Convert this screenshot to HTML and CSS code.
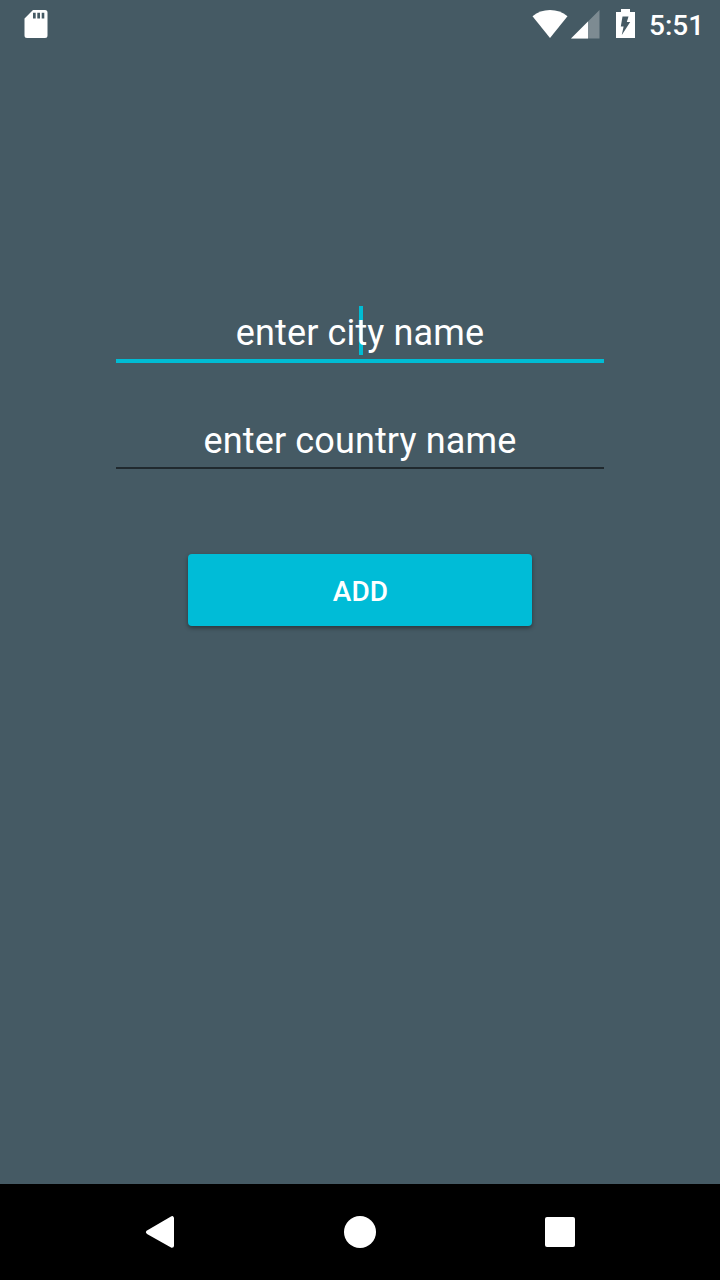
FILE: index.html
```html
<!DOCTYPE html>
<html lang="en">
<head>
<meta charset="utf-8">
<title>Add city</title>
<link rel="stylesheet" href="styles.css">
</head>
<body>
<div class="screen">
  <header class="status-bar">
    <svg class="icon-sd" width="24" height="28" viewBox="0 0 24 28"><path fill="#fff" fill-rule="evenodd" d="M9 0H21Q23.500 0 23.500 2.500V25.500Q23.500 28 21 28H3Q.5 28 .5 25.500V8.500ZM9 2.700V8.500H11.700V2.700ZM13.300 2.700V8.500H16V2.700ZM17.700 2.700V8.500H20.300V2.700Z"/></svg>
    <div class="status-right">
      <svg class="icon-wifi" width="36" height="28" viewBox="0 0 36 28"><path fill="#fff" d="M18 28L.5 6.200Q8 0 18 0T35.500 6.200Z"/></svg>
      <svg class="icon-signal" width="29" height="29" viewBox="0 0 29 29"><path fill="#fff" fill-opacity=".3" d="M0 28.500L28.500 0V28.500Z"/><path fill="#fff" d="M0 28.500L17 11.500V28.500Z"/></svg>
      <svg class="icon-battery" width="19" height="29" viewBox="0 0 19 29"><path fill="#fff" fill-rule="evenodd" d="M5 0H14V3H19V29H0V3H5ZM6.500 7.500H12.500L10.800 13H14.200L5.800 26L7.600 17.500H4.800Z"/></svg>
      <span class="clock">5:51</span>
    </div>
  </header>
  <main class="form">
    <div class="field focused"><span class="caret"></span><span class="label">enter city name</span></div>
    <div class="field"><span class="label">enter country name</span></div>
    <button class="add" type="button">ADD</button>
  </main>
  <nav class="nav-bar">
    <svg width="32" height="32" viewBox="0 0 32 32"><path fill="#fff" stroke="#fff" stroke-width="4" stroke-linejoin="round" d="M4 16.200L28 2.200V29.800Z"/></svg>
    <svg width="32" height="32" viewBox="0 0 32 32"><circle fill="#fff" cx="16" cy="16" r="16"/></svg>
    <svg width="32" height="32" viewBox="0 0 32 32"><rect fill="#fff" x="1" y="1" width="30" height="30" rx="2"/></svg>
  </nav>
</div>
</body>
</html>
```
FILE: styles.css
```css
* { box-sizing: border-box; }
body { margin: 0; background: #455a64; color: #fff; font-family: Roboto, sans-serif; }
svg { display: block; flex: none; }
.screen { width: 720px; height: 1280px; display: flex; flex-direction: column; }
.status-bar { height: 48px; display: flex; justify-content: space-between; align-items: flex-start; padding: 0 17px 0 24px; }
.icon-sd { margin-top: 10px; }
.status-right { display: flex; align-items: flex-start; }
.icon-wifi { margin: 10px 3px 0 0; }
.icon-signal { margin: 10px 16px 0 0; }
.icon-battery { margin: 9px 14px 0 0; }
.clock { width: 54px; font-size: 28px; font-weight: 500; line-height: 52px; white-space: nowrap; }
.form { flex: 1; display: flex; flex-direction: column; align-items: center; padding-top: 255px; }
.field { position: relative; width: 488px; height: 60px; border-bottom: 2px solid #20292e; text-align: center; font-size: 36px; line-height: 64px; letter-spacing: .13px; }
.field.focused { border-bottom: 4px solid #00bcd4; margin-bottom: 46px; line-height: 60px; }
.label { position: relative; }
.caret { position: absolute; left: 243px; top: 3px; width: 4px; height: 49px; background: #00bcd4; }
.add { width: 344px; height: 72px; margin-top: 85px; padding: 3px 0 0; border: 0; border-radius: 4px; background: #00bcd7; color: #fff; font: 500 28px/32px Roboto, sans-serif; letter-spacing: .2px; text-indent: 1px; box-shadow: 0 2px 4px rgba(0, 0, 0, .4); }
.nav-bar { height: 96px; background: #000; display: flex; justify-content: center; align-items: center; gap: 168px; }
```
